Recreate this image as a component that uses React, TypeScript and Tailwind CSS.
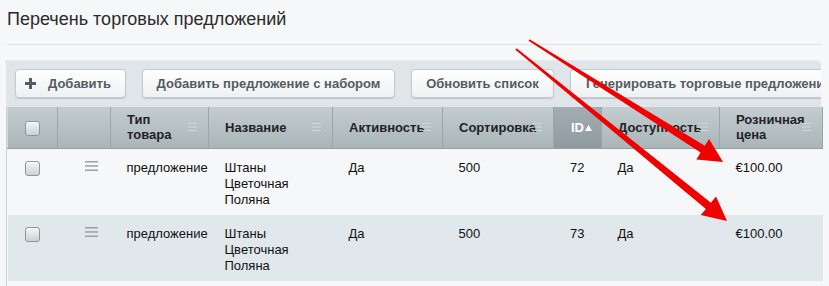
import React from 'react'

const cols = [
  { key: 'chk', w: 'w-[50px]' },
  { key: 'menu', w: 'w-[53px]' },
  { key: 'type', w: 'w-[98px]', label: 'Тип товара', wrap: true },
  { key: 'name', w: 'w-[124px]', label: 'Название' },
  { key: 'active', w: 'w-[110px]', label: 'Активность' },
  { key: 'sort', w: 'w-[111px]', label: 'Сортировка' },
  { key: 'id', w: 'w-[48px]', label: 'ID' },
  { key: 'avail', w: 'w-[118px]', label: 'Доступность' },
  { key: 'price', w: 'w-[103px]', label: 'Розничная цена' },
]

const rows = [
  { id: 72, type: 'предложение', name: ['Штаны', 'Цветочная', 'Поляна'], active: 'Да', sort: 500, avail: 'Да', price: '€100.00' },
  { id: 73, type: 'предложение', name: ['Штаны', 'Цветочная', 'Поляна'], active: 'Да', sort: 500, avail: 'Да', price: '€100.00' },
]

function Checkbox() {
  return (
    <span className="inline-block w-[15px] h-[15px] rounded-[3px] border border-[#8e969a] bg-gradient-to-b from-[#f4f5f5] to-[#cdd1d3] shadow-[inset_0_1px_0_#fff]" />
  )
}

function SortLines() {
  return (
    <svg width="9" height="8" viewBox="0 0 9 8" className="absolute right-[11px] top-1/2 -translate-y-1/2">
      <rect x="0" y="0" width="9" height="1" fill="#d3d9db" />
      <rect x="0" y="3.5" width="9" height="1" fill="#d3d9db" />
      <rect x="0" y="7" width="9" height="1" fill="#d3d9db" />
    </svg>
  )
}

function Btn({ children, className = '' }: { children: React.ReactNode; className?: string }) {
  return (
    <button className={`h-[29px] shrink-0 rounded-[4px] border border-[#c3cacd] bg-gradient-to-b from-[#ffffff] to-[#eef1f2] shadow-[0_1px_1px_rgba(0,0,0,0.15)] text-[13px] font-bold text-[#545c60] whitespace-nowrap flex items-center ${className}`}>
      {children}
    </button>
  )
}

// tapered red arrow, drawn on top of the screenshot like an annotation
function Arrow({ x1, y1, x2, y2 }: { x1: number; y1: number; x2: number; y2: number }) {
  const dx = x2 - x1
  const dy = y2 - y1
  const len = Math.hypot(dx, dy)
  const ux = dx / len
  const uy = dy / len
  const nx = -uy
  const ny = ux
  const head = 24
  const bx = x2 - ux * head
  const by = y2 - uy * head
  const p = (x: number, y: number) => `${x.toFixed(1)},${y.toFixed(1)}`
  const pts = [
    p(x1 + nx * 1, y1 + ny * 1),
    p(bx + nx * 4, by + ny * 4),
    p(bx + nx * 12, by + ny * 12),
    p(x2, y2),
    p(bx - nx * 12, by - ny * 12),
    p(bx - nx * 4, by - ny * 4),
    p(x1 - nx * 1, y1 - ny * 1),
  ].join(' ')
  return <polygon points={pts} fill="#f00000" />
}

export default function App() {
  return (
    <div className="relative w-[829px] h-[286px] overflow-hidden bg-[#f5f7f8] font-['Liberation_Sans',Arial,sans-serif] text-[#000]">
      <div className="px-[7px] pt-[7px]">
        <h1 className="text-[18px] leading-[24px] text-[#2b2b2b] font-normal">Перечень торговых предложений</h1>
        <div className="mt-[13px] h-px w-[815px] bg-[#dde2e5]" />
        <div className="mt-[15px] w-[815px] border-l border-[#c8d0d3] -ml-px">
          <div className="rounded-t-[5px] bg-[#dfe5e8] -ml-px pl-[9px] pt-[8px] pb-[9px] flex gap-[16px] overflow-hidden border-t border-[#e6ebed]">
            <Btn className="w-[111px] pl-[9px]">
              <svg width="11" height="11" viewBox="0 0 11 11" className="mr-[12px]">
                <rect x="4" y="0" width="3" height="11" fill="#555d62" />
                <rect x="0" y="4" width="11" height="3" fill="#555d62" />
              </svg>
              Добавить
            </Btn>
            <Btn className="w-[253px] justify-center">Добавить предложение с набором</Btn>
            <Btn className="w-[143px] justify-center">Обновить список</Btn>
            <Btn className="w-[290px] pl-[15px]">Генерировать торговые предложения</Btn>
          </div>
          <table className="table-fixed border-collapse w-[815px]">
            <colgroup>
              {cols.map(c => (
                <col key={c.key} className={c.w} />
              ))}
            </colgroup>
            <thead>
              <tr className="h-[41px]">
                {cols.map(c => (
                  <th
                    key={c.key}
                    className={`relative p-0 text-left align-middle text-[13px] font-bold leading-[15px] border-b border-[#95a0a4] border-l border-l-[#d6dde0] border-r border-r-[#9ba6aa] ${
                      c.key === 'id'
                        ? 'bg-gradient-to-b from-[#a3aeb2] to-[#8f9a9e] text-white'
                        : 'bg-gradient-to-b from-[#c3cdd0] to-[#aab5b8] text-[#1f2326]'
                    }`}
                  >
                    {c.key === 'chk' && (
                      <div className="flex justify-center pt-[2px]">
                        <Checkbox />
                      </div>
                    )}
                    {c.label && c.key !== 'id' && (
                      <>
                        <div className={`pl-[16px] ${c.wrap ? 'w-[70px]' : 'pr-[20px]'} ${c.key === 'price' ? 'w-[85px]' : ''}`}>{c.label}</div>
                        <SortLines />
                      </>
                    )}
                    {c.key === 'id' && (
                      <div className="pl-[17px] flex items-center">
                        ID
                        <svg width="7" height="6" viewBox="0 0 7 6" className="ml-[1px] mt-[1px]">
                          <polygon points="3.5,0 7,6 0,6" fill="#fff" />
                        </svg>
                      </div>
                    )}
                  </th>
                ))}
              </tr>
            </thead>
            <tbody className="text-[13px] leading-[16px] text-[#111]">
              {rows.map((r, i) => (
                <tr key={r.id} className={`h-[66px] ${i % 2 ? 'bg-[#e1e8eb]' : 'bg-[#f5f7f8]'}`}>
                  <td className="align-top pt-[12px] text-center">
                    <Checkbox />
                  </td>
                  <td className="align-top pt-[12px]">
                    <svg width="13" height="10" viewBox="0 0 13 10" className="ml-[27px]">
                      <rect x="0" y="0" width="13" height="1.5" fill="#9aa1a4" />
                      <rect x="0" y="4.2" width="13" height="1.5" fill="#9aa1a4" />
                      <rect x="0" y="8.5" width="13" height="1.5" fill="#9aa1a4" />
                    </svg>
                  </td>
                  <td className="align-top pt-[11px] pl-[16px]">{r.type}</td>
                  <td className="align-top pt-[11px] pl-[16px] pb-[7px]">
                    {r.name.map(n => (
                      <div key={n}>{n}</div>
                    ))}
                  </td>
                  <td className="align-top pt-[11px] pl-[16px]">{r.active}</td>
                  <td className="align-top pt-[11px] pl-[16px]">{r.sort}</td>
                  <td className="align-top pt-[11px] pr-[17px] text-right">{r.id}</td>
                  <td className="align-top pt-[11px] pl-[16px]">{r.avail}</td>
                  <td className="align-top pt-[11px] pl-[16px]">{r.price}</td>
                </tr>
              ))}
            </tbody>
          </table>
          <div className="h-[10px]" />
        </div>
      </div>
      <svg className="absolute left-0 top-0 pointer-events-none" width="829" height="286">
        <Arrow x1={529} y1={40} x2={723} y2={162} />
        <Arrow x1={516} y1={49} x2={727} y2={221} />
      </svg>
    </div>
  )
}
